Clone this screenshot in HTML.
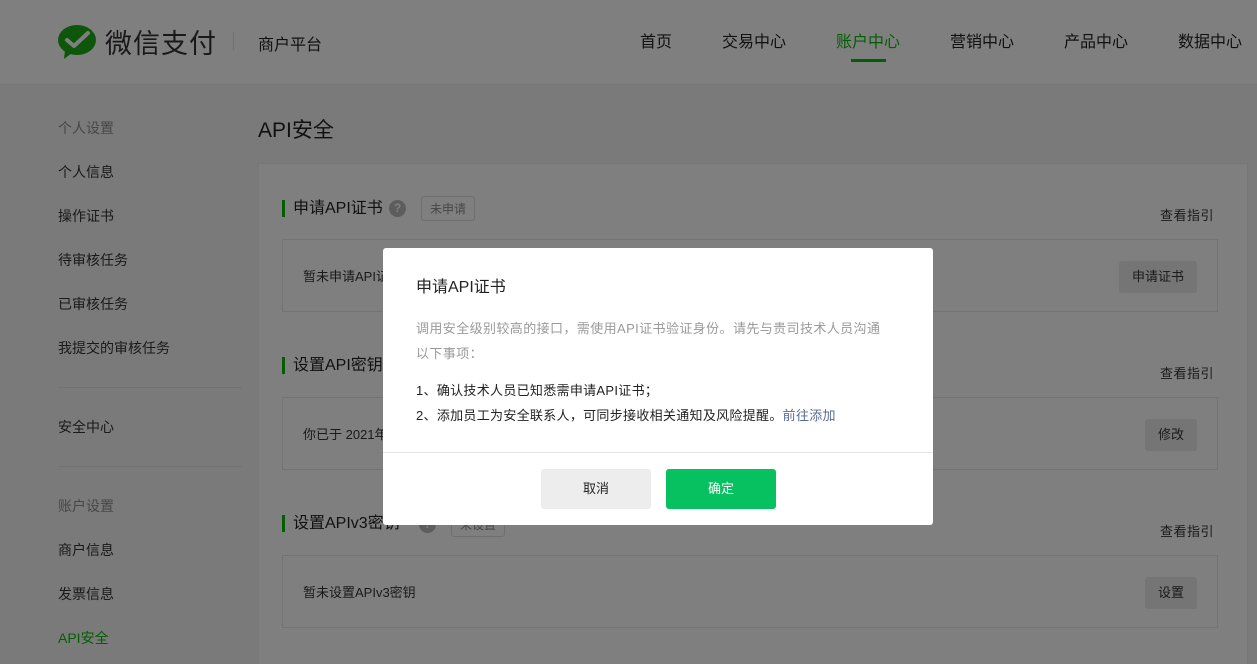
<!DOCTYPE html>
<html style="background:#7a7a7a;overflow:hidden"><head><meta charset="utf-8"><style>
*{margin:0;padding:0;box-sizing:border-box}
body{width:1257px;height:664px;overflow:hidden;background:#7a7a7a}
#w{width:1257px;height:664px;overflow:hidden;background:#f4f4f4;font-family:"Liberation Sans","Noto Sans CJK SC",sans-serif;font-size:14px;color:#353535;position:relative}
.hd{position:absolute;left:0;top:0;width:1257px;height:85px;background:#fff;border-bottom:1px solid #ececec}
.logo{position:absolute;left:57px;top:22px;display:flex;align-items:center}
.brand{font-size:27px;color:#333;margin-left:8px;letter-spacing:1px}
.sep{position:absolute;left:233px;top:32px;width:1px;height:18px;background:#ddd}
.plat{position:absolute;left:258px;top:31px;font-size:16px;color:#222}
.nav{position:absolute;top:28px;font-size:16px;color:#222}
.nav.on{color:#09bb07}
.bar{position:absolute;left:851px;top:59px;width:35px;height:3px;background:#09bb07}
.side{position:absolute;left:58px;font-size:14px;color:#353535}
.side.g{color:#8e8e8e}
.hr{position:absolute;left:58px;width:184px;height:1px;background:#e2e2e2}
.title{position:absolute;left:258px;top:114px;font-size:21px;color:#222}
.card{position:absolute;left:258px;top:163px;width:990px;height:501px;background:#fff;border:1px solid #eee;border-bottom:none}
.sec{position:absolute;left:282px;font-size:16px;color:#222;border-left:3px solid #09bb07;padding-left:8px;line-height:17px}
.link{position:absolute;left:1160px;font-size:13px;color:#353535;letter-spacing:0.5px}
.box{position:absolute;left:282px;width:936px;height:73px;border:1px solid #e6e6e6;background:#fff}
.box span{position:absolute;left:20px;top:26px;font-size:13px}
.btn{position:absolute;right:20px;top:21px;height:32px;padding:0 13px;background:#eaeaea;border-radius:3px;font-size:13px;line-height:32px}
.tag{position:absolute;border:1px solid #ddd;border-radius:3px;font-size:12px;color:#8e8e8e;padding:3px 8px}
.q{position:absolute;width:17px;height:17px;border-radius:50%;background:#bbb;color:#fff;font-size:12px;text-align:center;line-height:17px;font-weight:bold}
.mask{position:absolute;left:0;top:0;width:1257px;height:664px;background:rgba(0,0,0,.5)}
.dlg{position:absolute;left:383px;top:248px;width:550px;height:277px;background:#fff;border-radius:3px}
.dlg h3{position:absolute;left:33px;top:25px;font-size:16px;font-weight:normal;color:#222}
.desc{position:absolute;left:33px;top:68px;width:490px;font-size:13px;line-height:25px;color:#9a9a9a;letter-spacing:0.4px}
.items{position:absolute;left:33px;top:130px;font-size:13px;line-height:25px;color:#222;letter-spacing:0.3px}
.items a{color:#576b95;text-decoration:none}
.ft{position:absolute;left:0;top:204px;width:550px;height:1px;background:#e5e5e5}
.b1{position:absolute;left:158px;top:221px;width:110px;height:40px;background:#ededed;border-radius:3px;text-align:center;line-height:40px;font-size:13px;color:#222}
.b2{position:absolute;left:283px;top:221px;width:110px;height:40px;background:#07c160;border-radius:3px;text-align:center;line-height:40px;font-size:13px;color:#fff}
</style></head><body><div id="w">
<div class="hd">
<div class="logo"><svg width="40" height="36" viewBox="0 0 40 36"><ellipse cx="20" cy="16" rx="19" ry="15" fill="#1aad19"/><path d="M8 26 L7 35 L15 29Z" fill="#1aad19"/><path d="M10 16 L17 22 L31 9" stroke="#fff" stroke-width="4" fill="none" stroke-linecap="round" stroke-linejoin="round"/></svg><span class="brand">微信支付</span></div>
<div class="sep"></div><div class="plat">商户平台</div>
<div class="nav" style="left:640px">首页</div>
<div class="nav" style="left:722px">交易中心</div>
<div class="nav on" style="left:836px">账户中心</div>
<div class="nav" style="left:950px">营销中心</div>
<div class="nav" style="left:1064px">产品中心</div>
<div class="nav" style="left:1178px">数据中心</div>
<div class="bar"></div>
</div>
<div class="side g" style="top:118px">个人设置</div>
<div class="side" style="top:162px">个人信息</div>
<div class="side" style="top:206px">操作证书</div>
<div class="side" style="top:250px">待审核任务</div>
<div class="side" style="top:294px">已审核任务</div>
<div class="side" style="top:338px">我提交的审核任务</div>
<div class="hr" style="top:387px"></div>
<div class="side" style="top:417px">安全中心</div>
<div class="hr" style="top:466px"></div>
<div class="side g" style="top:496px">账户设置</div>
<div class="side" style="top:540px">商户信息</div>
<div class="side" style="top:584px">发票信息</div>
<div class="side" style="top:628px;color:#09bb07">API安全</div>
<div class="title">API安全</div>
<div class="card"></div>
<div class="sec" style="top:200px">申请API证书</div><div class="q" style="left:389px;top:200px">?</div><div class="tag" style="left:421px;top:196px">未申请</div>
<div class="link" style="top:205px">查看指引</div>
<div class="box" style="top:239px"><span>暂未申请API证书</span><div class="btn">申请证书</div></div>
<div class="sec" style="top:357px">设置API密钥</div>
<div class="link" style="top:363px">查看指引</div>
<div class="box" style="top:397px"><span>你已于 2021年</span><div class="btn">修改</div></div>
<div class="sec" style="top:515px">设置APIv3密钥</div><div class="q" style="left:419px;top:516px">?</div><div class="tag" style="left:451px;top:512px">未设置</div>
<div class="link" style="top:521px">查看指引</div>
<div class="box" style="top:555px"><span>暂未设置APIv3密钥</span><div class="btn">设置</div></div>
<div class="mask"></div>
<div class="dlg">
<h3>申请API证书</h3>
<div class="desc">调用安全级别较高的接口，需使用API证书验证身份。请先与贵司技术人员沟通<br>以下事项：</div>
<div class="items">1、确认技术人员已知悉需申请API证书；<br>2、添加员工为安全联系人，可同步接收相关通知及风险提醒。<a>前往添加</a></div>
<div class="ft"></div>
<div class="b1">取消</div><div class="b2">确定</div>
</div>
</div></body></html>
